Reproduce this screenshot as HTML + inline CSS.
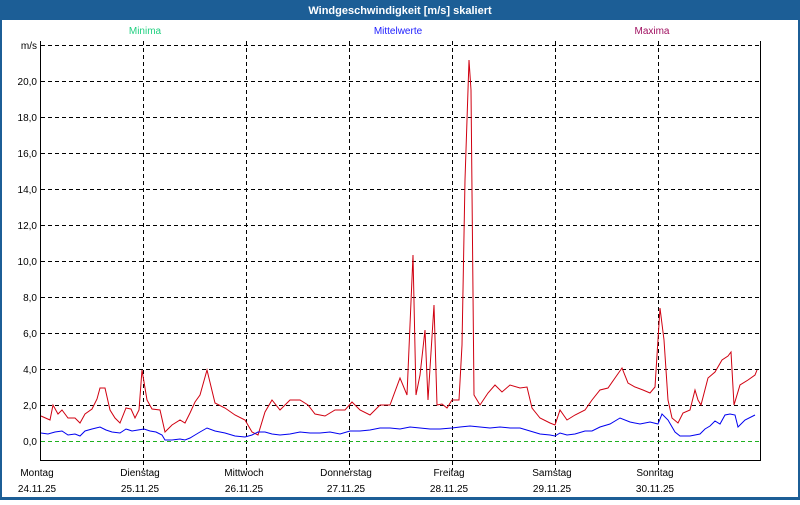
<!DOCTYPE html>
<html><head><meta charset="utf-8"><style>
body{margin:0;width:800px;height:500px;overflow:hidden;background:#fff;font-family:"Liberation Sans",sans-serif}
</style></head><body>
<svg width="800" height="500" xmlns="http://www.w3.org/2000/svg" font-family="Liberation Sans, sans-serif" font-size="10">
<rect x="0" y="0" width="800" height="500" fill="#1c5e96"/>
<rect x="2" y="20" width="796" height="477" fill="#fff"/>
<text x="400" y="14" fill="#fff" font-weight="bold" font-size="11" text-anchor="middle">Windgeschwindigkeit [m/s] skaliert</text>
<text x="145" y="34" fill="#20d080" text-anchor="middle">Minima</text>
<text x="398" y="34" fill="#2020ff" text-anchor="middle">Mittelwerte</text>
<text x="652" y="34" fill="#a01060" text-anchor="middle">Maxima</text>
<g stroke="#000" stroke-dasharray="4,3" stroke-width="1">
<line x1="41" y1="45.5" x2="760" y2="45.5"/><line x1="41" y1="81.5" x2="760" y2="81.5"/><line x1="41" y1="117.5" x2="760" y2="117.5"/><line x1="41" y1="153.5" x2="760" y2="153.5"/><line x1="41" y1="189.5" x2="760" y2="189.5"/><line x1="41" y1="225.5" x2="760" y2="225.5"/><line x1="41" y1="261.5" x2="760" y2="261.5"/><line x1="41" y1="297.5" x2="760" y2="297.5"/><line x1="41" y1="333.5" x2="760" y2="333.5"/><line x1="41" y1="369.5" x2="760" y2="369.5"/><line x1="41" y1="405.5" x2="760" y2="405.5"/>
<line x1="143.5" y1="41" x2="143.5" y2="470"/><line x1="246.5" y1="41" x2="246.5" y2="470"/><line x1="349.5" y1="41" x2="349.5" y2="470"/><line x1="452.5" y1="41" x2="452.5" y2="470"/><line x1="555.5" y1="41" x2="555.5" y2="470"/><line x1="658.5" y1="41" x2="658.5" y2="470"/>
</g>
<line x1="41" y1="441.5" x2="760" y2="441.5" stroke="#20b020" stroke-dasharray="4,3"/>
<polyline fill="none" stroke="#000" points="40.5,41 40.5,460.5 760.5,460.5 760.5,41"/>
<g text-anchor="end" fill="#000">
<text x="37" y="49">m/s</text><text x="37" y="85">20,0</text><text x="37" y="121">18,0</text><text x="37" y="157">16,0</text><text x="37" y="193">14,0</text><text x="37" y="229">12,0</text><text x="37" y="265">10,0</text><text x="37" y="301">8,0</text><text x="37" y="337">6,0</text><text x="37" y="373">4,0</text><text x="37" y="409">2,0</text><text x="37" y="445">0,0</text>
</g>
<g text-anchor="middle" fill="#000">
<text x="37" y="476">Montag</text><text x="37" y="492">24.11.25</text>
<text x="140" y="476">Dienstag</text><text x="140" y="492">25.11.25</text>
<text x="244" y="476">Mittwoch</text><text x="244" y="492">26.11.25</text>
<text x="346" y="476">Donnerstag</text><text x="346" y="492">27.11.25</text>
<text x="449" y="476">Freitag</text><text x="449" y="492">28.11.25</text>
<text x="552" y="476">Samstag</text><text x="552" y="492">29.11.25</text>
<text x="655" y="476">Sonntag</text><text x="655" y="492">30.11.25</text>
</g>
<polyline fill="none" stroke="#d00010" points="41,416 50,420 53,405 58,414 62,410 68,418 75,418 80,423 85,414 92,409 97,399 100,388 105,388 110,410 115,418 120,423 126,408 131,409 135,418 139,410 142,370 147,400 152,409 160,410 165,432 172,425 180,420 185,423 190,413 195,402 200,395 207,370 215,403 225,408 235,415 245,420 252,432 258,435 265,412 272,400 280,410 290,400 300,400 308,405 315,414 325,416 335,410 345,410 352,402 360,410 370,415 380,405 390,405 400,378 407,395 413,255 416,395 420,375 425,330 428,400 434,305 437,405 442,404 447,408 452,400 459,400 462,345 465,180 469,60 471,90 474,395 480,405 488,393 495,385 502,392 510,385 520,388 527,387 532,408 540,418 550,423 555,425 560,410 567,420 575,415 585,410 592,400 600,390 608,388 615,378 622,368 628,383 635,387 643,390 650,393 655,387 660,308 664,340 668,400 672,418 678,423 683,413 690,410 695,390 698,400 701,405 708,378 715,372 722,360 728,356 731,352 734,405 740,385 748,380 755,375 757,370"/>
<polyline fill="none" stroke="#0000f0" points="41,433 48,434 55,432 62,431 68,435 75,434 80,436 85,431 92,429 100,427 106,430 112,432 120,433 126,429 132,431 138,430 144,429 150,431 156,432 162,435 165,440 172,440 180,439 185,440 190,438 195,435 200,432 207,428 215,431 225,433 235,436 245,437 252,435 258,432 265,432 272,434 280,435 290,434 300,432 310,433 320,433 330,432 340,434 350,431 360,431 370,430 380,428 390,428 400,429 410,427 420,428 430,429 440,429 452,428 460,427 470,426 480,427 490,428 500,427 510,428 520,428 530,431 540,434 550,435 555,436 560,433 567,435 575,434 585,431 592,431 600,427 610,424 620,418 630,422 640,424 650,422 658,424 662,414 668,420 675,432 680,436 690,436 700,434 705,429 710,426 715,421 720,424 725,415 730,414 735,415 738,427 745,420 755,415"/>
</svg>
</body></html>
